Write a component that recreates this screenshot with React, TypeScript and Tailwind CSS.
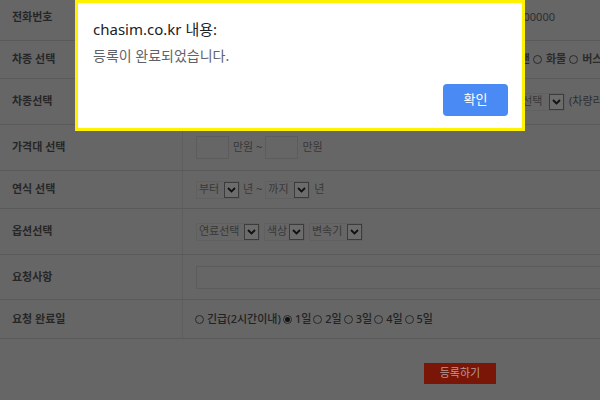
import { ReactNode } from 'react';

const font = { fontFamily: '"Noto Sans", "Noto Sans CJK KR", sans-serif' };

function Row({ label, h, children }: { label: string; h: string; children?: ReactNode }) {
  return (
    <div className={`flex border-b border-[#5a5a5a] ${h}`}>
      <div className="w-[183px] shrink-0 flex items-center pl-[12px] border-r border-[#5e5e5e] text-[11px] font-bold text-[#262626] whitespace-nowrap">
        {label}
      </div>
      <div className="flex-1 flex items-center pl-[13px] text-[11px] text-[#333] whitespace-nowrap overflow-hidden">
        {children}
      </div>
    </div>
  );
}

function Select({ label, w }: { label: string; w: string }) {
  return (
    <div className={`flex items-center h-[18px] border border-[#606060] shrink-0 ${w}`}>
      <span className="flex-1 pl-[2px] text-[#383838] text-[11px]">{label}</span>
      <span className="w-[15px] h-[16px] border border-[#3c3c3c] bg-[#6c6c6c] flex items-center justify-center">
        <svg width="9" height="6" viewBox="0 0 9 6" fill="none" stroke="#111" strokeWidth="1.8">
          <path d="M1 1l3.5 3.5L8 1" />
        </svg>
      </span>
    </div>
  );
}

function Radio({ on }: { on?: boolean }) {
  return (
    <span className="inline-flex shrink-0 w-[9px] h-[9px] rounded-full border border-[#2a2a2a] items-center justify-center mr-[1px]">
      {on && <span className="w-[5px] h-[5px] rounded-full bg-[#111]" />}
    </span>
  );
}

export default function App() {
  return (
    <div className="relative w-[600px] h-[400px] overflow-hidden bg-[#666666]" style={font}>
      <div className="-mt-[6px]">
        <Row label="전화번호" h="h-[47px]">
          <span className="ml-auto pr-[45px] text-[#2e2e2e]">010-0000-00000</span>
        </Row>
        <Row label="차종 선택" h="h-[38px]">
          <div className="flex items-center gap-[3px] ml-[237px] font-bold text-[#2b2b2b]">
            <Radio />승용 <Radio />SUV <Radio />밴 <Radio />화물 <Radio />버스 <Radio />기타
          </div>
        </Row>
        <Row label="차종선택" h="h-[46px]">
          <div className="flex items-center gap-[4px] ml-[233px]">
            <Select label="모델선택" w="w-[66px]" />
            <Select label="등급선택" w="w-[66px]" />
            <span className="text-[#2e2e2e]">(차량리스트에서 선택)</span>
          </div>
        </Row>
        <Row label="가격대 선택" h="h-[46px]">
          <span className="w-[33px] h-[23px] border border-[#5c5c5c]" />
          <span className="ml-[4px] mr-[3px] text-[#383838]">만원 ~</span>
          <span className="w-[33px] h-[23px] border border-[#5c5c5c]" />
          <span className="ml-[4px] text-[#383838]">만원</span>
        </Row>
        <Row label="연식 선택" h="h-[38px]">
          <Select label="부터" w="w-[44px]" />
          <span className="ml-[3px] mr-[3px] text-[#383838]">년 ~</span>
          <Select label="까지" w="w-[45px]" />
          <span className="ml-[4px] text-[#383838]">년</span>
        </Row>
        <Row label="옵션선택" h="h-[46px]">
          <div className="flex items-center gap-[4px]">
            <Select label="연료선택" w="w-[64px]" />
            <Select label="색상" w="w-[41px]" />
            <Select label="변속기" w="w-[54px]" />
          </div>
        </Row>
        <Row label="요청사항" h="h-[45px]">
          <span className="w-[420px] h-[23px] border border-[#5c5c5c] shrink-0" />
        </Row>
        <Row label="요청 완료일" h="h-[39px]">
          <div className="flex items-center text-[11px] font-medium text-[#222] gap-[2px] -ml-[1px]">
            <Radio />긴급(2시간이내) <Radio on />1일 <Radio />2일 <Radio />3일 <Radio />4일 <Radio />5일
          </div>
        </Row>
        <div className="flex pl-[424px] pt-[24px]">
          <button className="w-[72px] h-[21px] bg-[#7a1608] text-[#b89a94] text-[11px]">등록하기</button>
        </div>
      </div>

      <div className="absolute left-[75px] top-0 w-[450px] h-[131px] border-[3px] border-[#fff200] bg-white flex flex-col">
        <div className="pl-[15px] pt-[16px] text-[15px] text-[#202124] leading-[20px]">chasim.co.kr 내용:</div>
        <div className="pl-[15px] pt-[8px] text-[14px] text-[#5f6368] leading-[18px]">등록이 완료되었습니다.</div>
        <div className="flex justify-end pr-[14px] pt-[19px]">
          <button className="w-[65px] h-[32px] rounded-[4px] bg-[#4a8af4] text-white text-[13px]">확인</button>
        </div>
      </div>
    </div>
  );
}
